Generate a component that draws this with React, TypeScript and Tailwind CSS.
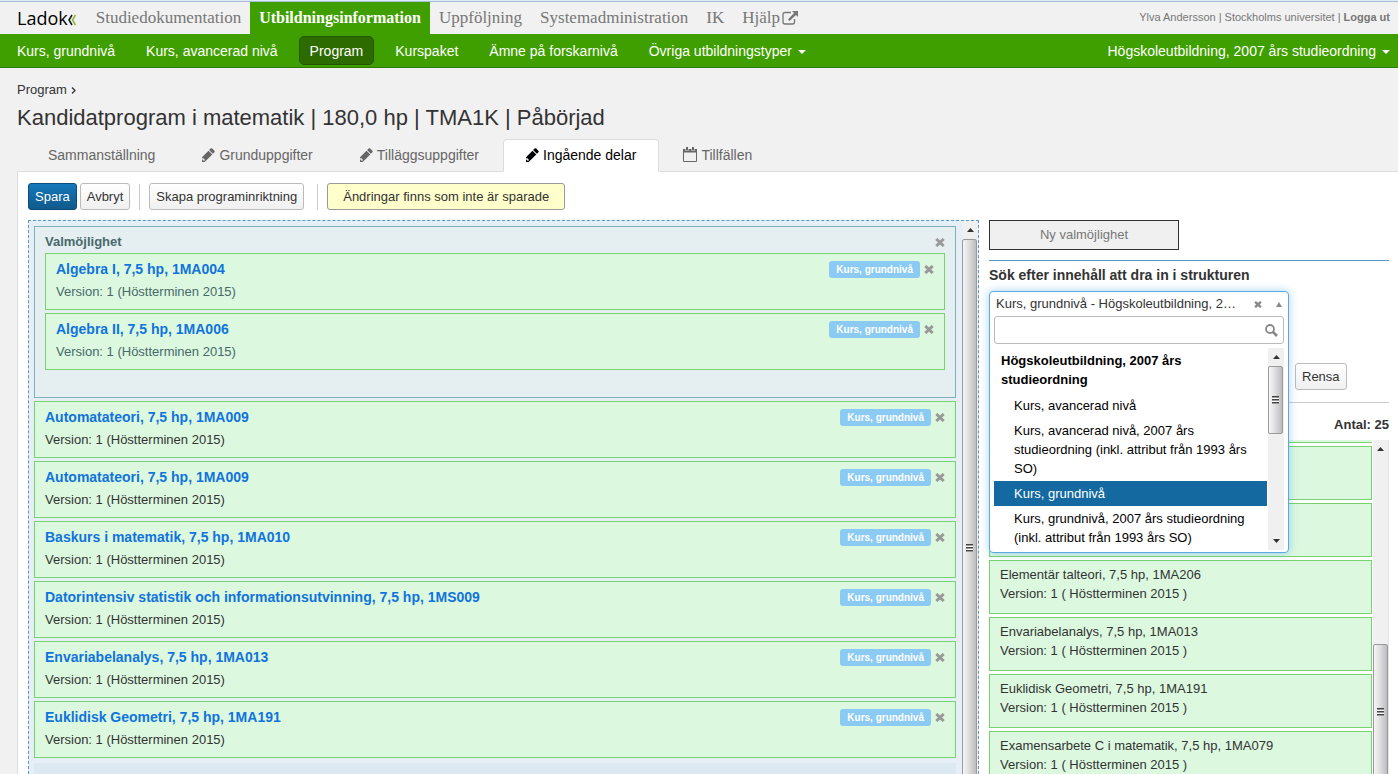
import type { ReactNode } from 'react';

const mainLinks = ['Studiedokumentation', 'Utbildningsinformation', 'Uppföljning', 'Systemadministration', 'IK'];

const subLinks = ['Kurs, grundnivå', 'Kurs, avancerad nivå', 'Program', 'Kurspaket', 'Ämne på forskarnivå'];

const choiceCourses = ['Algebra I, 7,5 hp, 1MA004', 'Algebra II, 7,5 hp, 1MA006'];

const courses = [
  'Automatateori, 7,5 hp, 1MA009',
  'Automatateori, 7,5 hp, 1MA009',
  'Baskurs i matematik, 7,5 hp, 1MA010',
  'Datorintensiv statistik och informationsutvinning, 7,5 hp, 1MS009',
  'Envariabelanalys, 7,5 hp, 1MA013',
  'Euklidisk Geometri, 7,5 hp, 1MA191',
];

// The first two hits are covered by the open drop-down
const hits = [
  '',
  '',
  'Elementär talteori, 7,5 hp, 1MA206',
  'Envariabelanalys, 7,5 hp, 1MA013',
  'Euklidisk Geometri, 7,5 hp, 1MA191',
  'Examensarbete C i matematik, 7,5 hp, 1MA079',
];

const options = [
  'Kurs, avancerad nivå',
  'Kurs, avancerad nivå, 2007 års studieordning (inkl. attribut från 1993 års SO)',
  'Kurs, grundnivå',
  'Kurs, grundnivå, 2007 års studieordning (inkl. attribut från 1993 års SO)',
];

function CloseIcon({ className }: { className: string }) {
  return (
    <svg viewBox="0 0 10 9" className={className} fill="none" stroke="currentColor" aria-hidden="true">
      <path d="M1.300 1l7.400 7M8.700 1L1.300 8" strokeWidth="3" />
    </svg>
  );
}

function PencilIcon() {
  return (
    <svg viewBox="256 128 1408 1536" className="h-[14px] w-[13px]" fill="currentColor" aria-hidden="true">
      <path d="M491 1536l91-91-235-235-91 91v107h128v128h107zm469-1120l416 416-832 832h-416v-416zm683 96q0 53-37 90l-166 166-416-416 166-165q36-38 90-38 53 0 91 38l235 234q37 39 37 91z" />
    </svg>
  );
}

function CalendarIcon() {
  return (
    <svg viewBox="0 0 14 15" className="h-[15px] w-[14px]" aria-hidden="true">
      <path d="M.5 3.5h13v11H.5z" fill="none" stroke="currentColor" />
      <path d="M0 2h14v3.500H0z" fill="currentColor" />
      <path d="M2.500 0h3v4h-3zM8.500 0h3v4h-3z" fill="#f1f1f1" />
      <path d="M3 0h2v3.500H3zM9 0h2v3.500H9z" fill="currentColor" />
    </svg>
  );
}

function ExternalIcon() {
  return (
    <svg viewBox="0 0 16 14" className="h-[14px] w-4" aria-hidden="true">
      <path d="M9 1.500H3Q1 1.500 1 3.500V11Q1 13 3 13h7.500Q12.500 13 12.500 11V8" fill="none" stroke="currentColor" strokeWidth="1.300" />
      <path d="M10 0h6v6l-2-2-6.500 6L6 8.500 12 2z" fill="currentColor" />
    </svg>
  );
}

function Caret() {
  return (
    <svg viewBox="0 0 8 4" className="mt-[2px] h-1 w-2" fill="currentColor" aria-hidden="true">
      <path d="M0 0h8L4 4z" />
    </svg>
  );
}

function Arrow({ down = false }: { down?: boolean }) {
  return (
    <svg viewBox="0 0 7 4" className="h-1 w-[7px] shrink-0" fill="#333" aria-hidden="true">
      <path d={down ? 'M0 0h7L3.500 4z' : 'M0 4h7L3.500 0z'} />
    </svg>
  );
}

function Thumb({ className }: { className: string }) {
  return (
    <div
      className={`flex items-center justify-center rounded-[2px] border border-[#9a9a9d] bg-linear-to-r from-[#f6f6f6] via-[#dcdcde] to-[#bcbcc0] ${className}`}
    >
      <div className="flex w-[7px] flex-col">
        <span className="h-px bg-[#444]" />
        <span className="h-px bg-[#999]" />
        <span className="h-px bg-white" />
        <span className="h-px bg-[#444]" />
        <span className="h-px bg-[#999]" />
        <span className="h-px bg-white" />
        <span className="h-px bg-[#444]" />
        <span className="h-px bg-[#999]" />
      </div>
    </div>
  );
}

function Tab({ icon, active = false, children }: { icon?: ReactNode; active?: boolean; children: string }) {
  return (
    <a
      href="#"
      aria-current={active ? 'page' : undefined}
      className={`flex h-[33px] items-center gap-1 rounded-t border px-[22px] pb-[2px] text-sm ${
        active ? 'border-[#ddd] border-b-white bg-white text-black' : 'border-transparent text-[#666]'
      }`}
    >
      {icon}
      {children}
    </a>
  );
}

function PlainButton({ children }: { children: string }) {
  return (
    <button
      type="button"
      className="h-[27px] rounded-[3px] border border-[#bbb] bg-linear-to-b from-white to-[#f0f0f0] px-[6px] text-[13px] text-[#333]"
    >
      {children}
    </button>
  );
}

function CourseCard({ title, nested = false }: { title: string; nested?: boolean }) {
  return (
    <li className="border border-[#77d36f] bg-[#dcf8df] px-[10px] pt-1 pb-[5px]">
      <div className="flex h-[22px] items-center">
        <a href="#" className="flex-1 text-sm font-bold text-[#1173de]">
          {title}
        </a>
        <span className="mr-1 rounded-[3px] bg-[#8bcbf3] px-[7px] text-[10px] leading-[17px] font-bold text-white">
          Kurs, grundnivå
        </span>
        <button type="button" aria-label="Ta bort" className="text-[#999]">
          <CloseIcon className="h-[9px] w-[10px]" />
        </button>
      </div>
      <p className={`leading-6 ${nested ? 'text-[#47696b]' : ''}`}>Version: 1 (Höstterminen 2015)</p>
    </li>
  );
}

function Header() {
  return (
    <header>
      <div className="h-[2px] border-b border-[#a5bfd8] bg-[#dfecf9]" />
      <div className="flex h-8 items-stretch pr-2 pl-[17px]">
        <a href="#" className="flex items-center pr-[11px] font-['Open_Sans',sans-serif] text-lg text-black">
          Ladok
          <svg viewBox="0 0 8 12" className="mt-[3px] h-3 w-2" fill="none" strokeWidth="1.500" aria-hidden="true">
            <path d="M4 1L1 6l3 5" stroke="#111" />
            <path d="M7.500 1l-3 5 3 5" stroke="#86b82e" />
          </svg>
        </a>
        <nav className="flex flex-1 font-['Liberation_Serif',serif] text-[#777]">
          {mainLinks.map((label) => (
            <a
              key={label}
              href="#"
              className={`flex items-center px-[9px] ${
                label === 'Utbildningsinformation' ? 'bg-[#3f9f00] text-base font-bold text-white' : 'text-[17px]'
              }`}
            >
              {label}
            </a>
          ))}
          <a href="#" className="flex items-center gap-[2px] px-[9px] text-[17px]">
            Hjälp
            <ExternalIcon />
          </a>
        </nav>
        <p className="flex items-center gap-[3px] pb-[2px] text-[11px] text-[#777]">
          Ylva Andersson | Stockholms universitet |
          <a href="#" className="font-bold">
            Logga ut
          </a>
        </p>
      </div>
      <div className="flex h-[34px] items-center justify-between border-b border-[#2c7a00] bg-[#3f9f00] pr-2 pl-[7px] text-sm text-white">
        <nav className="flex items-center gap-[11px]">
          {subLinks.map((label) => (
            <a
              key={label}
              href="#"
              className={
                label === 'Program'
                  ? 'flex h-[29px] items-center rounded-[5px] border border-[#245800] bg-[#2d6b00] px-[10px]'
                  : 'px-[10px]'
              }
            >
              {label}
            </a>
          ))}
          <button type="button" className="flex items-center gap-[6px] px-[10px]">
            Övriga utbildningstyper
            <Caret />
          </button>
        </nav>
        <button type="button" className="flex items-center gap-[6px]">
          Högskoleutbildning, 2007 års studieordning
          <Caret />
        </button>
      </div>
    </header>
  );
}

function TypePicker() {
  return (
    <div className="relative h-[25px] w-[300px]">
      <div className="absolute inset-x-0 top-0 z-10 rounded border border-[#5ba8e5] bg-white px-1 pb-[2px] shadow-[0_0_8px_rgba(82,168,236,0.5)]">
        <div className="flex h-6 items-center pr-[2px] pl-[2px]">
          <button type="button" aria-haspopup="listbox" aria-expanded="true" className="flex-1 text-left">
            Kurs, grundnivå - Högskoleutbildning, 2…
          </button>
          <button type="button" aria-label="Rensa val" className="text-[#888]">
            <CloseIcon className="h-[7px] w-2" />
          </button>
          <svg viewBox="0 0 6 5" className="ml-[14px] h-[5px] w-[6px]" fill="#888" aria-hidden="true">
            <path d="M0 5h6L3 0z" />
          </svg>
        </div>
        <label className="flex h-7 items-center rounded-[3px] border border-[#bbb] px-[5px]">
          <input type="text" aria-label="Sök kurstyp" className="min-w-0 flex-1 outline-none" />
          <svg viewBox="0 0 13 13" className="h-[13px] w-[13px]" fill="none" stroke="#888" aria-hidden="true">
            <circle cx="5" cy="5" r="4" strokeWidth="1.800" />
            <path d="M8 8l4 4" strokeWidth="2.600" />
          </svg>
        </label>
        <div className="mt-1 flex text-black">
          <div className="flex-1 leading-[19px]">
            <p id="option-group" className="px-[7px] pt-[3px] pb-1 font-bold">
              Högskoleutbildning, 2007 års studieordning
            </p>
            <ul role="listbox" aria-labelledby="option-group">
              {options.map((option) => {
                const selected = option === 'Kurs, grundnivå';
                return (
                  <li
                    key={option}
                    role="option"
                    aria-selected={selected}
                    className={`py-[3px] pr-[7px] pl-5 ${selected ? 'bg-[#1369a0] text-white' : ''}`}
                  >
                    {option}
                  </li>
                );
              })}
            </ul>
          </div>
          <div className="ml-px flex w-4 flex-col bg-[#f0f0f0]">
            <div className="flex h-[18px] items-center justify-center">
              <Arrow />
            </div>
            <Thumb className="h-[68px] w-[15px]" />
            <div className="mt-auto flex h-[18px] items-center justify-center">
              <Arrow down />
            </div>
          </div>
        </div>
      </div>
    </div>
  );
}

function SearchColumn() {
  return (
    <aside className="flex w-[400px] shrink-0 flex-col">
      <button type="button" className="h-[30px] w-[190px] border border-[#333] bg-[#f0f0f0] text-[#777]">
        Ny valmöjlighet
      </button>
      <h2 className="mt-[10px] mb-[6px] border-t border-[#5598c8] pt-1 text-sm leading-5 font-bold">
        Sök efter innehåll att dra in i strukturen
      </h2>
      <TypePicker />
      <div className="mt-[47px] ml-[306px]">
        <PlainButton>Rensa</PlainButton>
      </div>
      <p className="mt-3 mb-[5px] border-t border-[#ccc] pt-3 text-right leading-5 font-bold">Antal: 25</p>
      <div className="flex min-h-0 flex-1 gap-px overflow-hidden">
        <ul className="flex flex-1 flex-col gap-[3px]">
          <li className="h-[3px] shrink-0 border-b border-[#77d36f] bg-[#dcf8df]" />
          {hits.map((hit, i) => (
            <li
              key={i}
              className="h-[54px] shrink-0 border border-[#77d36f] bg-[#dcf8df] px-[10px] pt-1 leading-[19px]"
            >
              {hit && (
                <>
                  <p>{hit}</p>
                  <p>Version: 1 ( Höstterminen 2015 )</p>
                </>
              )}
            </li>
          ))}
        </ul>
        <div className="flex w-4 flex-col border-r border-[#e4e4e4] bg-[#f0f0f0]">
          <div className="flex h-[18px] shrink-0 items-center justify-center">
            <Arrow />
          </div>
          <Thumb className="mt-[186px] h-[136px] w-[15px] shrink-0" />
        </div>
      </div>
    </aside>
  );
}

export default function App() {
  return (
    <div className="flex h-screen flex-col overflow-hidden bg-[#f1f1f1] font-['Liberation_Sans',Arial,sans-serif] text-[13px] text-[#333]">
      <Header />
      <div className="pt-3 pl-[17px]">
        <p className="flex items-center gap-1 leading-5">
          <a href="#">Program</a>
          <svg viewBox="0 0 5 7" className="h-[7px] w-[5px]" fill="none" stroke="currentColor" aria-hidden="true">
            <path d="M1 .5l3 3-3 3" strokeWidth="1.300" />
          </svg>
        </p>
        <h1 className="mt-[3px] text-[22px] leading-[30px]">Kandidatprogram i matematik | 180,0 hp | TMA1K | Påbörjad</h1>
      </div>

      {/* Tabs overlap the panel's top border */}
      <nav className="relative mt-[6px] -mb-px flex gap-px pl-[25px]">
        <Tab>Sammanställning</Tab>
        <Tab icon={<PencilIcon />}>Grunduppgifter</Tab>
        <Tab icon={<PencilIcon />}>Tilläggsuppgifter</Tab>
        <Tab icon={<PencilIcon />} active>
          Ingående delar
        </Tab>
        <Tab icon={<CalendarIcon />}>Tillfällen</Tab>
      </nav>

      <main className="ml-[17px] flex min-h-0 flex-1 flex-col border-t border-l border-[#ddd] bg-white pt-[11px] pr-[9px] pl-[10px]">
        <div className="flex shrink-0 items-center">
          <button
            type="button"
            className="mr-[3px] h-[27px] rounded-[3px] border border-[#0d4c78] bg-linear-to-b from-[#1478bb] to-[#105a8b] px-[6px] text-white"
          >
            Spara
          </button>
          <PlainButton>Avbryt</PlainButton>
          <span className="mx-[9px] h-[26px] w-px bg-[#ccc]" />
          <PlainButton>Skapa programinriktning</PlainButton>
          <span className="mr-[9px] ml-[13px] h-[26px] w-px bg-[#ccc]" />
          <p className="rounded-[3px] border border-[#999] bg-[#ffffcc] px-[15px] leading-[25px]">
            Ändringar finns som inte är sparade
          </p>
        </div>

        <div className="mt-[10px] flex min-h-0 flex-1 gap-[10px]">
          <section className="flex min-w-0 flex-1 gap-[6px] overflow-hidden border border-b-0 border-dashed border-[#6295bb] bg-[#e6eef6] pl-[5px]">
            <div className="flex-1 pt-[5px]">
              <div className="mb-[3px] border border-[#7fb2b8] bg-[#e5eef0] px-[10px] pt-1 pb-[27px]">
                <div className="flex h-[22px] items-center justify-between">
                  <h2 className="text-[13px] font-bold text-[#47696b]">Valmöjlighet</h2>
                  <button type="button" aria-label="Ta bort" className="text-[#999]">
                    <CloseIcon className="h-[9px] w-[10px]" />
                  </button>
                </div>
                <ul className="flex flex-col gap-[3px]">
                  {choiceCourses.map((title) => (
                    <CourseCard key={title} title={title} nested />
                  ))}
                </ul>
              </div>
              <ul className="flex flex-col gap-[3px]">
                {courses.map((title, i) => (
                  <CourseCard key={i} title={title} />
                ))}
              </ul>
              <div className="mt-[5px] h-12 bg-[#dce9f1]" />
            </div>
            <div className="flex w-4 flex-col bg-[#f0f0f0]">
              <div className="flex h-[18px] shrink-0 items-center justify-center">
                <Arrow />
              </div>
              <Thumb className="h-[618px] w-[15px] shrink-0" />
            </div>
          </section>
          <SearchColumn />
        </div>
      </main>
    </div>
  );
}
